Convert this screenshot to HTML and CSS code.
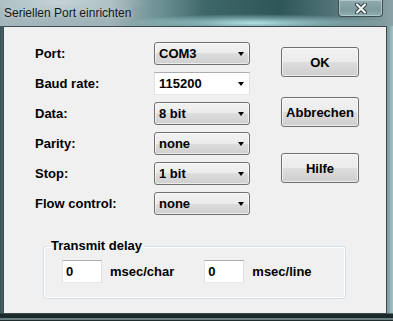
FILE: index.html
```html
<!DOCTYPE html>
<html lang="de">

<head>
    <meta charset="UTF-8">
    <title>Seriellen Port einrichten</title>
    <link rel="stylesheet" href="styles.css">
</head>

<body>
    <div class="window">
        <div class="titlebar">
            <span class="title">Seriellen Port einrichten</span>
            <div class="close-btn">
                <svg width="12" height="11" viewBox="0 0 12 11">
                    <path d="M2 1.5 L10 9.5 M10 1.5 L2 9.5" stroke="#2b3a3c" stroke-width="4" stroke-linecap="round" />
                    <path d="M2 1.5 L10 9.5 M10 1.5 L2 9.5" stroke="#f4f6f6" stroke-width="2.2" stroke-linecap="round" />
                </svg>
            </div>
        </div>

        <div class="frame">
            <div class="client">
                <div class="top">
                    <div class="fields">
                        <label>Port:</label>
                        <div class="combo"><span>COM3</span><i class="arrow"></i></div>

                        <label>Baud rate:</label>
                        <div class="combo editable"><span>115200</span><i class="arrow"></i></div>

                        <label>Data:</label>
                        <div class="combo"><span>8 bit</span><i class="arrow"></i></div>

                        <label>Parity:</label>
                        <div class="combo"><span>none</span><i class="arrow"></i></div>

                        <label>Stop:</label>
                        <div class="combo"><span>1 bit</span><i class="arrow"></i></div>

                        <label>Flow control:</label>
                        <div class="combo"><span>none</span><i class="arrow"></i></div>
                    </div>

                    <div class="buttons">
                        <button type="button" class="btn-ok">OK</button>
                        <button type="button" class="btn-cancel">Abbrechen</button>
                        <button type="button" class="btn-help">Hilfe</button>
                    </div>
                </div>

                <fieldset class="group">
                    <legend>Transmit delay</legend>
                    <div class="delay-row">
                        <div class="edit first">0</div>
                        <span class="unit">msec/char</span>
                        <div class="edit second">0</div>
                        <span class="unit">msec/line</span>
                    </div>
                </fieldset>
            </div>
        </div>
    </div>
</body>

</html>
```

FILE: styles.css
```css
body {
    margin: 0;
    width: 393px;
    height: 321px;
    overflow: hidden;
    font-family: "Liberation Sans", Arial, sans-serif;
}

.window {
    width: 393px;
    height: 321px;
    display: flex;
    flex-direction: column;
    background: linear-gradient(to right, #3a5254 0px, #4a6466 3px, #7f9da1 388px, #a9c3c6 393px);
}

.titlebar {
    height: 26px;
    display: flex;
    justify-content: space-between;
    align-items: flex-start;
    background:
        radial-gradient(ellipse 130px 9px at 255px 23px, rgba(200, 248, 252, 0.85), rgba(200, 248, 252, 0)),
        radial-gradient(ellipse 90px 14px at 60px 2px, rgba(220, 232, 234, 0.6), rgba(220, 232, 234, 0)),
        linear-gradient(to right, #a4b7bc 0px, #9fb3b8 110px, #6d9193 160px, #3e6769 205px, #2e5658 280px, #4f7275 330px, #8aa3a8 393px);
}

.title {
    font-family: "Liberation Sans", Arial, sans-serif;
    font-size: 12px;
    line-height: 15px;
    color: #101820;
    padding: 6px 0 0 4px;
    text-shadow: 0 0 6px rgba(255, 255, 255, 0.7);
}

.close-btn {
    width: 45px;
    height: 17px;
    margin-right: 10px;
    box-sizing: border-box;
    border: 1px solid #3b4d4f;
    border-top: none;
    border-radius: 0 0 4px 4px;
    background: linear-gradient(#8faaae, #7e9ca0 60%, #90adb1);
    box-shadow: inset 0 0 0 1px rgba(220, 235, 236, 0.45);
    display: flex;
    justify-content: center;
    align-items: center;
}

.frame {
    flex: 1;
    display: flex;
    align-items: flex-start;
    background: linear-gradient(to bottom, rgba(0, 0, 0, 0) 0px, rgba(0, 0, 0, 0) 287px, #1b2a2b 288px, #1b2a2b 292px, #b8cfd2 293px, #1e2e2f 294px);
}

.client {
    margin-left: 3px;
    width: 384px;
    height: 288px;
    box-sizing: border-box;
    border: 1px solid #3c4a4c;
    background-color: #f0f0f0;
    font-size: 13px;
    font-weight: bold;
    color: #000;
}

.top {
    display: flex;
    padding: 15px 0 0 31px;
}

.fields {
    display: grid;
    grid-template-columns: 119px 96px;
    grid-auto-rows: 23px;
    row-gap: 7px;
    align-items: center;
}

label {
    line-height: 15px;
}

.combo {
    height: 23px;
    box-sizing: border-box;
    display: flex;
    align-items: center;
    justify-content: space-between;
    padding: 0 5px 0 4px;
    border: 1px solid #707070;
    border-radius: 3px;
    background: linear-gradient(#f2f2f2 0%, #ebebeb 50%, #dddddd 50%, #cfcfcf 100%);
    box-shadow: inset 0 0 0 1px rgba(255, 255, 255, 0.6);
}

.combo.editable {
    background: #fff;
    border-radius: 0;
    border-color: #abadb3 #dbdfe6 #e3e9ef #e2e3ea;
    box-shadow: none;
}

.arrow {
    width: 0;
    height: 0;
    border-left: 3px solid transparent;
    border-right: 3px solid transparent;
    border-top: 4px solid #000;
}

.buttons {
    display: flex;
    flex-direction: column;
    margin: 5px 0 0 31px;
}

button {
    width: 78px;
    height: 30px;
    padding: 0;
    font-family: "Liberation Sans", Arial, sans-serif;
    font-size: 13px;
    font-weight: bold;
    color: #000;
    border: 1px solid #707070;
    border-radius: 3px;
    background: linear-gradient(#f2f2f2 0%, #ebebeb 50%, #dddddd 50%, #cfcfcf 100%);
    box-shadow: inset 0 0 0 1px rgba(255, 255, 255, 0.6);
}

.btn-cancel {
    margin-top: 20px;
}

.btn-help {
    margin-top: 26px;
}

.group {
    margin: 24px 0 0 39px;
    width: 303px;
    box-sizing: border-box;
    padding: 7px 5px 15px 5px;
    border: 1px solid #d5dfe5;
    border-radius: 3px;
    box-shadow: inset 0 0 0 1px #fff;
}

legend {
    padding: 0 2px;
    line-height: 14px;
}

.delay-row {
    display: flex;
    align-items: center;
}

.edit {
    width: 40px;
    height: 23px;
    box-sizing: border-box;
    padding-left: 3px;
    line-height: 21px;
    background: #fff;
    border: 1px solid;
    border-color: #abadb3 #dbdfe6 #e3e9ef #e2e3ea;
}

.edit.first {
    margin-left: 13px;
}

.edit.second {
    margin-left: 30px;
}

.unit {
    margin-left: 8px;
}
```
